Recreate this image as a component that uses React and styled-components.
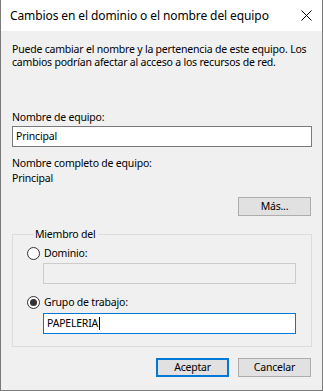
import React from "react";
import styled, { createGlobalStyle } from "styled-components";

const Global = createGlobalStyle`
  html, body { margin: 0; padding: 0; background: #f0f0f0; }
  body { font-family: "Noto Sans", "Open Sans", sans-serif; color: #000; }
  * { box-sizing: border-box; }
`;

const Window = styled.div`
  width: 323px;
  height: 391px;
  display: flex;
  flex-direction: column;
  border: 1px solid #7a7a7a;
  border-top: none;
  background: #f0f0f0;
  overflow: hidden;
`;

const TitleBar = styled.div`
  height: 31px;
  flex: none;
  background: #fff;
  display: flex;
  align-items: center;
  justify-content: space-between;
  padding: 0 10px 0 9px;
  font-size: 12px;
  letter-spacing: -0.1px;
`;

const Title = styled.span`
  line-height: 16px;
`;

const Body = styled.div`
  flex: 1;
  display: flex;
  flex-direction: column;
  padding: 0 10px 0 11px;
  font-size: 10.5px;
  letter-spacing: -0.2px;
`;

const Text = styled.div`
  line-height: 13px;
  margin-top: ${(p) => p.$mt || 0}px;
  white-space: nowrap;
`;

const TextBox = styled.div`
  height: 21px;
  display: flex;
  align-items: center;
  padding: 0 3px;
  background: ${(p) => (p.$disabled ? "#f0f0f0" : "#fff")};
  border: 1px solid ${(p) => (p.$disabled ? "#cccccc" : p.$focus ? "#0078d7" : "#7a7a7a")};
  margin-top: ${(p) => p.$mt || 0}px;
  margin-left: ${(p) => p.$ml || 0}px;
  line-height: 13px;
  white-space: nowrap;
`;

const Caret = styled.span`
  display: inline-block;
  width: 1px;
  height: 13px;
  background: #000;
  margin-left: 1px;
`;

const Button = styled.div`
  width: 73px;
  height: 19px;
  display: flex;
  align-items: center;
  justify-content: center;
  background: #e1e1e1;
  border: ${(p) => (p.$default ? "2px solid #0078d7" : "1px solid #adadad")};
  line-height: 13px;
`;

const ButtonRow = styled.div`
  display: flex;
  justify-content: flex-end;
  gap: 9px;
  margin-top: ${(p) => p.$mt || 0}px;
  padding-right: 1px;
`;

const Group = styled.fieldset`
  margin: 12px 0 0 0;
  padding: 0 15px 12px 14px;
  border: 1px solid #dcdcdc;
  display: flex;
  flex-direction: column;
  min-width: 0;
`;

const Legend = styled.legend`
  margin-left: 6px;
  padding: 0 2px;
  line-height: 13px;
`;

const RadioRow = styled.div`
  display: flex;
  align-items: center;
  gap: 4px;
  height: 13px;
  margin-top: ${(p) => p.$mt || 0}px;
  line-height: 13px;
`;

const RadioCircle = styled.span`
  width: 13px;
  height: 13px;
  border-radius: 50%;
  border: 1px solid #333;
  background: #fff;
  display: flex;
  align-items: center;
  justify-content: center;
  flex: none;
  &::after {
    content: "";
    display: ${(p) => (p.$checked ? "block" : "none")};
    width: 7px;
    height: 7px;
    border-radius: 50%;
    background: #333;
  }
`;

const CloseIcon = () => (
  <svg width="11" height="11" viewBox="0 0 11 11">
    <path d="M0.5 0.5 L10.5 10.5 M10.5 0.5 L0.5 10.5" stroke="#000" strokeWidth="1" />
  </svg>
);

export default function App() {
  return (
    <>
      <Global />
      <Window>
        <TitleBar>
          <Title>Cambios en el dominio o el nombre del equipo</Title>
          <CloseIcon />
        </TitleBar>
        <Body>
          <Text $mt={12}>Puede cambiar el nombre y la pertenencia de este equipo. Los</Text>
          <Text>cambios podrían afectar al acceso a los recursos de red.</Text>
          <Text $mt={42}>Nombre de equipo:</Text>
          <TextBox $mt={2}>Principal</TextBox>
          <Text $mt={10}>Nombre completo de equipo:</Text>
          <Text $mt={2}>Principal</Text>
          <ButtonRow $mt={12}>
            <Button>Más...</Button>
          </ButtonRow>
          <Group>
            <Legend>Miembro del</Legend>
            <RadioRow $mt={6}>
              <RadioCircle />
              Dominio:
            </RadioRow>
            <TextBox $disabled $mt={3} $ml={16} />
            <RadioRow $mt={12}>
              <RadioCircle $checked />
              Grupo de trabajo:
            </RadioRow>
            <TextBox $focus $mt={4} $ml={16}>
              PAPELERIA
              <Caret />
            </TextBox>
          </Group>
          <ButtonRow $mt={11}>
            <Button $default>Aceptar</Button>
            <Button>Cancelar</Button>
          </ButtonRow>
        </Body>
      </Window>
    </>
  );
}
